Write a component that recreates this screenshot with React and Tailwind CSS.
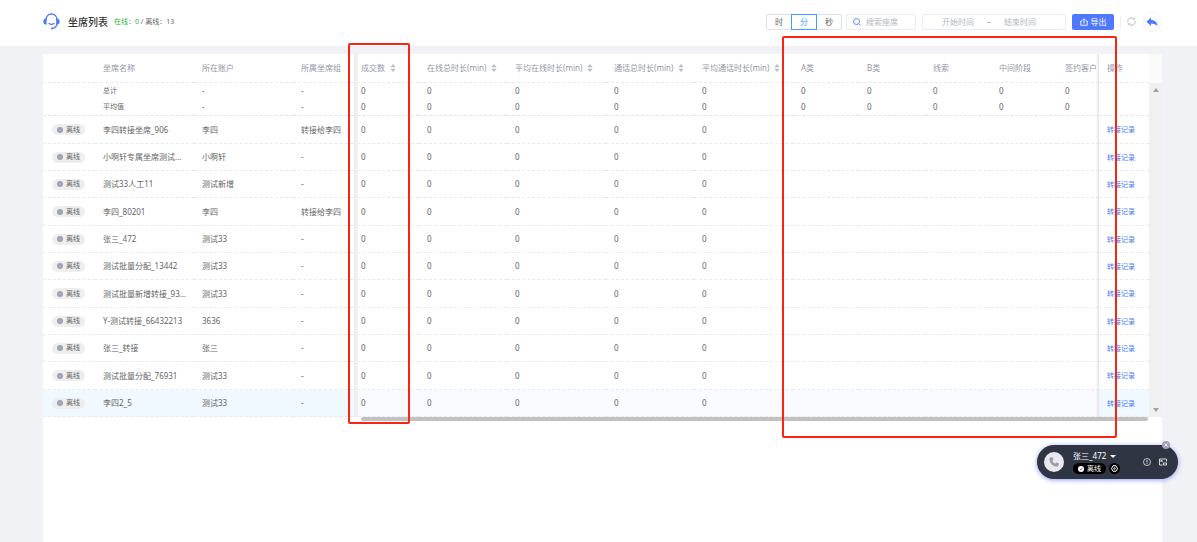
import React, { useState } from 'react';

const columns = [
  { title: '成交数', sort: true },
  { title: '在线总时长(min)', sort: true },
  { title: '平均在线时长(min)', sort: true },
  { title: '通话总时长(min)', sort: true },
  { title: '平均通话时长(min)', sort: true },
  { title: 'A类' },
  { title: 'B类' },
  { title: '线索' },
  { title: '中间阶段' },
  { title: '签约客户' },
];

const agents = [
  { name: '李四转接坐席_906', account: '李四', group: '转接给李四' },
  { name: '小啊轩专属坐席测试...', account: '小啊轩', group: '-' },
  { name: '测试33人工11', account: '测试新增', group: '-' },
  { name: '李四_80201', account: '李四', group: '转接给李四' },
  { name: '张三_472', account: '测试33', group: '-' },
  { name: '测试批量分配_13442', account: '测试33', group: '-' },
  { name: '测试批量新增转接_93...', account: '测试33', group: '-' },
  { name: 'Y-测试转接_66432213', account: '3636', group: '-' },
  { name: '张三_转接', account: '张三', group: '-' },
  { name: '测试批量分配_76931', account: '测试33', group: '-' },
  { name: '李四2_5', account: '测试33', group: '-', active: true },
];

const HeadsetIcon = () => (
  <svg className="w-[17px] h-[17px]" viewBox="0 0 17 17" fill="none" stroke="#5078fb">
    <path d="M3 7.500C3 3.600 5.200 1 8.500 1S14 3.600 14 7.500V10c0 3-2 5-5 5.400" strokeWidth="1.300" />
    <path d="M6 10.400c1.400 1 3.600 1 5 0" strokeWidth="1.200" strokeLinecap="round" />
    <path d="M3.600 5.600v6.100C1.700 11.700.3 10.600.3 8.700S1.700 5.600 3.600 5.600ZM13.400 5.600v6.100c1.900 0 3.300-1.100 3.300-3s-1.400-3.100-3.300-3.100Z" fill="#5078fb" stroke="none" />
    <circle cx="9" cy="15.400" r="1" fill="#5078fb" stroke="none" />
  </svg>
);

const CheckIcon = ({ className, mark }) => (
  <svg className={className} viewBox="0 0 12 12">
    <circle cx="6" cy="6" r="6" fill="currentColor" />
    <path d="M4 6.600 5.300 7.800 8.400 4.200" fill="none" stroke={mark} strokeWidth="1.300" />
  </svg>
);

const SortIcon = () => (
  <svg className="w-[6px] h-[8px] shrink-0" viewBox="0 0 6 8" fill="#b9bcc4">
    <path d="M3 0 5.600 3.200H.4ZM3 8 .4 4.800h5.200Z" />
  </svg>
);

// 列表
const AgentTable = () => (
  <div className="flex">
    <div className="relative flex-1 min-w-0">
      <table className="w-full table-fixed border-separate border-spacing-0 text-left text-[8px] leading-3 text-[#666] [&_td]:p-0 [&_td]:pl-2 [&_th]:p-0 [&_th]:pl-2 [&_th]:font-normal [&_td]:whitespace-nowrap [&_th]:whitespace-nowrap">
        <colgroup>
          <col className="w-[52px]" />
          <col className="w-[99px]" />
          <col className="w-[99px]" />
          <col className="w-[60px]" />
          <col className="w-[66px]" />
          <col className="w-[88px]" />
          <col className="w-[99px]" />
          <col className="w-[88px]" />
          <col className="w-[99px]" />
          <col className="w-[66px]" />
          <col className="w-[66px]" />
          <col className="w-[66px]" />
          <col className="w-[66px]" />
          <col />
          <col className="w-[50px]" />
        </colgroup>
        <thead>
          <tr className="h-[29px] text-[#9497a8] [&>th]:border-b [&>th]:border-dashed [&>th]:border-[#e8eaec]">
            <th></th>
            <th>坐席名称</th>
            <th>所在账户</th>
            <th>所属坐席组</th>
            {columns.map((c) => (
              <th key={c.title}>
                <span className="flex items-center gap-[5px]">
                  {c.title}
                  {c.sort && <SortIcon />}
                </span>
              </th>
            ))}
            <th>操作</th>
          </tr>
        </thead>
        <tbody>
          {['总计', '平均值'].map((label, i) => (
            <tr
              key={label}
              className={i === 0 ? 'h-4' : 'h-[17px] [&>td]:border-b [&>td]:border-dashed [&>td]:border-[#e3e5e8]'}
            >
              <td></td>
              <td className="text-[7px]">{label}</td>
              <td>-</td>
              <td>-</td>
              {columns.map((c) => (
                <td key={c.title}>0</td>
              ))}
              <td></td>
            </tr>
          ))}
        </tbody>
        <tbody>
          {agents.map((a) => (
            <tr
              key={a.name}
              className={`h-[27px] [&:nth-child(3n+1)]:h-7 [&>td]:border-b [&>td]:border-dashed [&>td]:border-[#e8eaec] ${
                a.active ? 'bg-[#f8faff] [&>td:nth-child(-n+4)]:bg-[#eff9ff] [&>td:last-child]:bg-[#eff9ff]' : ''
              }`}
            >
              <td>
                <span className="flex w-[33px] h-[11px] ml-px items-center justify-center gap-[3px] rounded-full bg-[#eeeeef] text-[7px]">
                  <CheckIcon className="w-[6px] h-[6px] text-[#9ba1b5]" mark="#c9cddb" />
                  离线
                </span>
              </td>
              <td>{a.name}</td>
              <td>{a.account}</td>
              <td>{a.group}</td>
              {columns.map((c, i) => (
                <td key={c.title}>{i < 5 ? '0' : ''}</td>
              ))}
              <td>
                <a href="#record" className="text-[7px] text-[#4a78fa]">转接记录</a>
              </td>
            </tr>
          ))}
        </tbody>
      </table>

      {/* 固定列阴影 */}
      <div className="absolute inset-y-0 left-[311px] w-1 bg-linear-to-r from-[#ebebeb] to-[#f4f4f4]"></div>
      <div className="absolute inset-y-0 right-[50px] w-[3px] bg-linear-to-l from-[#e4e4e4] to-transparent"></div>
    </div>

    {/* 纵向滚动条 */}
    <div className="flex w-[13px] flex-col">
      <div className="h-[29px] bg-[#fafafa]"></div>
      <div className="flex flex-1 flex-col items-center justify-between bg-[#f0f0f0] py-[5px] text-[#a0a0a0]">
        <svg className="w-[6px] h-1" viewBox="0 0 6 4" fill="currentColor"><path d="M3 0 6 4H0Z" /></svg>
        <svg className="w-[6px] h-1" viewBox="0 0 6 4" fill="currentColor"><path d="M3 4 0 0h6Z" /></svg>
      </div>
    </div>
  </div>
);

// 悬浮电话条
const PhoneBar = () => (
  <div className="absolute right-[19px] top-[445px] flex w-[141px] h-[34px] items-center rounded-full bg-[#2f3542] pl-[7px] pr-[11px] text-white shadow-[0_1px_5px_#8c9cf0]">
    <button type="button" aria-label="电话" className="flex w-5 h-5 items-center justify-center rounded-full bg-[#e8e8ee]">
      <svg className="w-[10px] h-[10px]" viewBox="0 0 24 24" fill="#9a9ca8">
        <path d="M4.500.8 7.200.5c.8-.1 1.400.3 1.700 1l1.600 4c.3.700.1 1.400-.5 1.900L7.800 9.200c1.400 3 3.900 5.500 7 7l1.900-2.300c.5-.6 1.200-.8 1.900-.5l3.900 1.700c.7.3 1.100 1 1 1.700l-.4 2.700c-.3 2-1.900 3.500-3.900 3.500C9 23 1 15 1 4.700 1 2.700 2.500 1.100 4.500.8Z" />
      </svg>
    </button>
    <div className="ml-[9px] flex flex-1 flex-col gap-px">
      <div className="flex items-center gap-1 text-[8px] leading-3">
        张三_472
        <svg className="w-[6px] h-[3px]" viewBox="0 0 6 3" fill="white"><path d="M0 0h6L3 3Z" /></svg>
      </div>
      <div className="flex items-center gap-[3px]">
        <span className="flex w-[33px] h-[11px] items-center justify-center gap-[3px] rounded-full bg-black text-[7px] leading-3">
          <CheckIcon className="w-[6px] h-[6px]" mark="#000" />
          离线
        </span>
        <span className="flex w-[11px] h-[11px] items-center justify-center rounded-full bg-black">
          <svg className="w-[7px] h-[7px]" viewBox="0 0 14 14" fill="none" stroke="white" strokeWidth="2">
            <path d="M4 1.500h6L13 7l-3 5.500H4L1 7Z" />
            <circle cx="7" cy="7" r="1.500" />
          </svg>
        </span>
      </div>
    </div>
    <div className="flex items-center gap-[3px]">
      <svg className="w-2 h-2" viewBox="0 0 16 16" fill="none" stroke="#e3e5ea" strokeWidth="1.600">
        <circle cx="8" cy="8" r="7" />
        <path d="M8 4v5M8 10.500v1.500" strokeWidth="2" />
      </svg>
      <span className="w-px h-[6px] bg-[#20242d]"></span>
      <svg className="ml-px w-2 h-2" viewBox="0 0 16 16" fill="none" stroke="#e3e5ea" strokeWidth="1.800">
        <path d="M15 7V2H1v12h6M4 8V5h3M4 5l4 4M9 10h6v4H9Z" />
      </svg>
    </div>
    <button type="button" aria-label="关闭" className="absolute right-2 -top-1 flex w-2 h-2 items-center justify-center rounded-full bg-[#9ea2b3]">
      <svg className="w-1 h-1" viewBox="0 0 4 4" stroke="white" strokeWidth="0.800"><path d="m.5.500 3 3m0-3-3 3" /></svg>
    </button>
  </div>
);

const App = () => {
  const [unit, setUnit] = useState('分');

  return (
    <div className="relative flex min-h-screen flex-col overflow-hidden bg-[#f0f2f5] font-['Noto_Sans','Noto_Sans_CJK_SC',sans-serif] text-[8px] leading-3 text-[#666]">
      <header className="flex h-[46px] items-center bg-white pb-[3px] pl-[43px] pr-[35px]">
        <HeadsetIcon />
        <h1 className="ml-2 text-[10px] leading-4 font-medium text-[#333]">坐席列表</h1>
        <p className="ml-[6px] text-[7px]">
          <span className="text-[#2fb52f]">在线：0</span> / 离线：13
        </p>

        <div className="ml-auto flex items-center">
          <div className="flex">
            {['时', '分', '秒'].map((u) => (
              <button
                key={u}
                type="button"
                onClick={() => setUnit(u)}
                className={`h-4 w-[26px] border not-first:-ml-px first:rounded-l-xs last:rounded-r-xs ${
                  u === unit ? 'relative border-[#409eff] text-[#409eff]' : 'border-[#dfe1e4]'
                }`}
              >
                {u}
              </button>
            ))}
          </div>

          <label className="ml-1 flex h-4 w-[70px] items-center gap-[5px] rounded-xs border border-[#e8ecfb] pl-[6px]">
            <svg className="w-2 h-2 shrink-0" viewBox="0 0 16 16" fill="none" stroke="#5078fb" strokeWidth="1.800">
              <circle cx="7" cy="7" r="6" />
              <path d="m11.500 11.500 3.500 3.500" />
            </svg>
            <input type="text" aria-label="搜索座席" placeholder="搜索座席" className="w-full min-w-0 outline-none placeholder:text-[#b4b7bf]" />
          </label>

          <div className="ml-[6px] flex h-4 w-36 items-center rounded-xs border border-[#e8ecfb] pl-[6px] pr-4 text-[#a8abb2]">
            <input type="text" aria-label="开始时间" placeholder="开始时间" className="w-0 flex-1 text-center outline-none placeholder:text-[#b4b7bf]" />
            <span>–</span>
            <input type="text" aria-label="结束时间" placeholder="结束时间" className="w-0 flex-1 text-center outline-none placeholder:text-[#b4b7bf]" />
          </div>

          <button type="button" className="ml-[6px] flex h-4 w-[42px] items-center justify-center gap-[3px] rounded-xs bg-[#4f78fd] text-white">
            <svg className="w-2 h-2" viewBox="0 0 16 16" fill="none" stroke="white" strokeWidth="1.800">
              <path d="M4 6H1.500v8.500h13V6H12M8 11V2M4.800 4.800 8 1.500l3.200 3.300" />
            </svg>
            导出
          </button>
          <span className="ml-[6px] h-3 w-px bg-[#eceef2]"></span>
          <button type="button" aria-label="刷新" className="ml-[6px]">
            <svg className="block w-[9px] h-[9px]" viewBox="0 0 18 18" fill="none" stroke="#a3a5ab" strokeWidth="1.500">
              <path d="M1.500 10.500A7.500 7.500 0 0 1 14.500 4M16.500 7.500A7.500 7.500 0 0 1 3.500 14" />
              <path d="M15.500 1.500v3.500H12M2.500 16.500V13H6" strokeWidth="1" />
            </svg>
          </button>
          <button type="button" aria-label="返回" className="ml-[6px] flex w-5 h-5 items-center justify-center rounded-full border border-[#f3f4f8]">
            <svg className="w-3 h-[10px]" viewBox="0 0 24 20" fill="#4f78fd">
              <path d="M10 1v5c8 0 12.500 4.500 13 12.500C20 14.500 16 13 10 13v5L1 9.500Z" />
            </svg>
          </button>
        </div>
      </header>

      <main className="mt-2 ml-[43px] mr-[35px] flex-1 bg-white">
        <AgentTable />
        {/* 横向滚动条 */}
        <div className="ml-[318px] mr-[14px] h-1 rounded-full bg-[#c1c1c1]"></div>
      </main>

      {/* 红框标注 */}
      <div className="pointer-events-none absolute left-[348px] top-[43px] w-[62px] h-[381px] rounded-xs border-2 border-[#fb2413]"></div>
      <div className="pointer-events-none absolute left-[782px] top-[36px] w-[335px] h-[402px] rounded-xs border-2 border-[#fb2413]"></div>

      <PhoneBar />
    </div>
  );
};

export default App;
